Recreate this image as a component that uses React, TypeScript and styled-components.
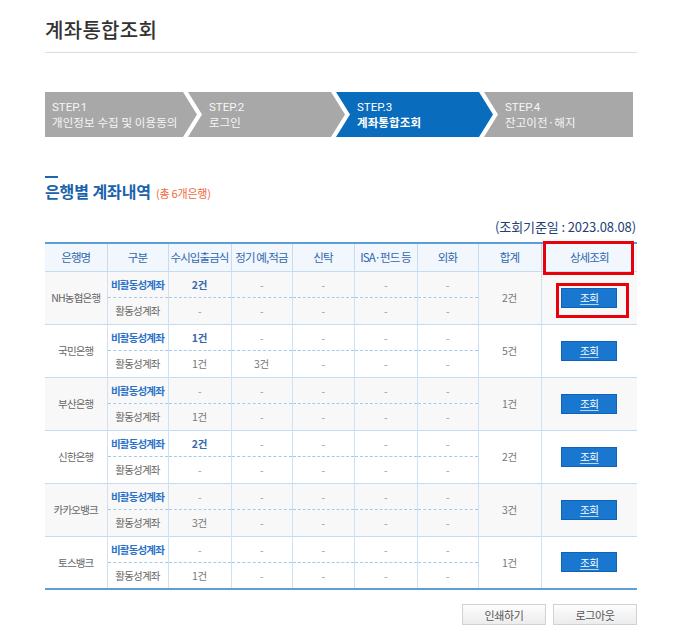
import React from 'react';
import styled, { createGlobalStyle } from 'styled-components';

const GlobalStyle = createGlobalStyle`
  html, body { margin: 0; padding: 0; background: #fff; }
  body { font-family: "Noto Sans CJK KR", "Noto Sans", sans-serif; color: #555; }
  * { box-sizing: border-box; }
`;

const Page = styled.div`
  width: 592px;
  margin-left: 45px;
  padding-top: 18px;
  padding-bottom: 20px;
`;

const Title = styled.h1`
  margin: 0;
  font-size: 20px;
  line-height: 24px;
  font-weight: 500;
  color: #333;
  letter-spacing: 0.3px;
  padding-bottom: 10px;
  border-bottom: 1px solid #dcdcdc;
`;

const Steps = styled.div`
  display: flex;
  width: 588px;
  height: 45px;
  margin-top: 39px;
`;

const Step = styled.div<{ $first?: boolean; $last?: boolean; $active?: boolean }>`
  flex: ${p => (p.$last ? '1 1 auto' : '0 0 auto')};
  width: ${p => (p.$first ? 152 : p.$last ? 149 : 157)}px;
  margin-left: ${p => (p.$first ? 0 : -9)}px;
  height: 45px;
  background: ${p => (p.$active ? '#0a6cbc' : '#a8a8a8')};
  color: ${p => (p.$active ? '#fff' : '#f6f6f6')};
  font-weight: ${p => (p.$active ? 700 : 400)};
  padding-left: ${p => (p.$first ? 7 : 21)}px;
  padding-top: 1px;
  display: flex;
  flex-direction: column;
  justify-content: center;
  font-size: 11.5px;
  line-height: 15px;
  letter-spacing: 0.1px;
  white-space: nowrap;
  clip-path: polygon(
    0 0,
    ${p => (p.$last ? '100% 0, 100% 100%' : 'calc(100% - 14px) 0, 100% 50%, calc(100% - 14px) 100%')},
    0 100%
    ${p => (p.$first ? '' : ', 14px 50%')}
  );
`;

const StepNo = styled.span`
  font-family: Roboto, "Liberation Sans", sans-serif;
  font-weight: 400;
  letter-spacing: 0;
  font-size: 11.5px;
`;

const SectionBar = styled.div`
  width: 13px;
  height: 2px;
  background: #1a66b0;
  margin-top: 39px;
`;

const SectionHead = styled.div`
  display: flex;
  align-items: baseline;
  gap: 5px;
  margin-top: 3px;
`;

const SectionTitle = styled.h2`
  margin: 0;
  font-size: 16px;
  line-height: 20px;
  font-weight: 700;
  color: #1a62ad;
  letter-spacing: -0.1px;
`;

const SectionCount = styled.span`
  font-size: 11px;
  color: #f06a3c;
  letter-spacing: -0.2px;
`;

const DateLine = styled.div`
  text-align: right;
  font-size: 13px;
  line-height: 16px;
  color: #233f74;
  margin-top: 18px;
  padding-right: 1px;
  letter-spacing: -0.1px;
`;

const Table = styled.table`
  width: 592px;
  margin-top: 7px;
  border-collapse: collapse;
  table-layout: fixed;
  border-top: 2px solid #5b9fd6;
  border-bottom: 2px solid #5b9fd6;
`;

const Th = styled.th`
  position: relative;
  height: 28px;
  padding: 0;
  background: #f1f7fd;
  color: #2f67ad;
  font-size: 11.5px;
  font-weight: 400;
  letter-spacing: -0.9px;
  white-space: nowrap;
  border-bottom: 1px solid #c5dcf0;
  & + & { border-left: 1px solid #c5dcf0; }
`;

const Row = styled.tr<{ $alt?: boolean; $first?: boolean }>`
  background: ${p => (p.$alt ? '#f8f8f8' : '#fff')};
  ${p => (p.$first ? 'border-top: 1px solid #c5dcf0;' : '')}
`;

const Td = styled.td<{ $dashed?: boolean; $edge?: boolean }>`
  position: relative;
  height: 26.5px;
  padding: 0;
  text-align: center;
  font-size: 10.5px;
  letter-spacing: -0.8px;
  white-space: nowrap;
  color: #777;
  border-left: ${p => (p.$edge ? 'none' : '1px solid #cfe2f3')};
  border-bottom: ${p => (p.$dashed ? '1px dashed #a5c9e8' : 'none')};
`;

const KindInactive = styled.span`
  color: #2a72c8;
  font-weight: 700;
`;

const KindActive = styled.span`
  color: #666;
`;

const Count = styled.span<{ $strong?: boolean }>`
  color: ${p => (p.$strong ? '#3a68ad' : '#777')};
  font-weight: ${p => (p.$strong ? 700 : 400)};
  letter-spacing: -0.3px;
`;

const Dash = styled.span`
  color: #999;
`;

const BankName = styled.span`
  color: #666;
`;

const ViewButton = styled.button`
  width: 56px;
  height: 20px;
  padding: 0;
  border: 1px solid #1062b2;
  background: #1a77d0;
  color: #fff;
  font-family: inherit;
  font-size: 10.5px;
  letter-spacing: -0.3px;
  text-decoration: underline;
  text-decoration-color: rgba(255, 255, 255, 0.7);
  text-underline-offset: 2px;
  cursor: pointer;
  vertical-align: middle;
`;

const Highlight = styled.span<{ $l: number; $t: number; $w: number; $h: number }>`
  position: absolute;
  left: ${p => p.$l}px;
  top: ${p => p.$t}px;
  width: ${p => p.$w}px;
  height: ${p => p.$h}px;
  border: 3px solid #e8000b;
  pointer-events: none;
`;

const Footer = styled.div`
  display: flex;
  justify-content: flex-end;
  gap: 7px;
  margin-top: 14px;
`;

const GrayButton = styled.button`
  width: 84px;
  height: 21px;
  padding: 0;
  border: 1px solid #d2d2d2;
  background: linear-gradient(#fdfdfd, #ececec);
  color: #555;
  font-family: inherit;
  font-size: 11px;
  letter-spacing: -0.4px;
`;

type Bank = {
  name: string;
  inactive: string[];
  active: string[];
  total: string;
  highlight?: boolean;
};

const banks: Bank[] = [
  { name: 'NH농협은행', inactive: ['2건', '-', '-', '-', '-'], active: ['-', '-', '-', '-', '-'], total: '2건', highlight: true },
  { name: '국민은행', inactive: ['1건', '-', '-', '-', '-'], active: ['1건', '3건', '-', '-', '-'], total: '5건' },
  { name: '부산은행', inactive: ['-', '-', '-', '-', '-'], active: ['1건', '-', '-', '-', '-'], total: '1건' },
  { name: '신한은행', inactive: ['2건', '-', '-', '-', '-'], active: ['-', '-', '-', '-', '-'], total: '2건' },
  { name: '카카오뱅크', inactive: ['-', '-', '-', '-', '-'], active: ['3건', '-', '-', '-', '-'], total: '3건' },
  { name: '토스뱅크', inactive: ['-', '-', '-', '-', '-'], active: ['1건', '-', '-', '-', '-'], total: '1건' },
];

const widths = [62, 61, 63, 61, 62, 63, 61, 63, 96];
const headers = ['은행명', '구분', '수시입출금식', '정기 예,적금', '신탁', 'ISA·펀드 등', '외화', '합계', '상세조회'];

const steps = [
  { no: 'STEP.1', label: '개인정보 수집 및 이용동의' },
  { no: 'STEP.2', label: '로그인' },
  { no: 'STEP.3', label: '계좌통합조회', active: true },
  { no: 'STEP.4', label: '잔고이전·해지' },
];

const Value = ({ v, strong }: { v: string; strong?: boolean }) =>
  v === '-' ? <Dash>-</Dash> : <Count $strong={strong}>{v}</Count>;

export default function App() {
  return (
    <>
      <GlobalStyle />
      <Page>
        <Title>계좌통합조회</Title>
        <Steps>
          {steps.map((s, i) => (
            <Step key={s.no} $first={i === 0} $last={i === steps.length - 1} $active={s.active}>
              <StepNo>{s.no}</StepNo>
              <span>{s.label}</span>
            </Step>
          ))}
        </Steps>

        <SectionBar />
        <SectionHead>
          <SectionTitle>은행별 계좌내역</SectionTitle>
          <SectionCount>(총 6개은행)</SectionCount>
        </SectionHead>
        <DateLine>(조회기준일 : 2023.08.08)</DateLine>

        <Table>
          <colgroup>
            {widths.map((w, i) => (
              <col key={i} style={{ width: w }} />
            ))}
          </colgroup>
          <thead>
            <tr>
              {headers.map((h, i) => (
                <Th key={h}>
                  {h}
                  {i === headers.length - 1 && <Highlight $l={1} $t={-3} $w={91} $h={34} />}
                </Th>
              ))}
            </tr>
          </thead>
          <tbody>
            {banks.map((b, bi) => (
              <React.Fragment key={b.name}>
                <Row $alt={bi % 2 === 0} $first={bi > 0}>
                  <Td rowSpan={2} $edge>
                    <BankName>{b.name}</BankName>
                  </Td>
                  <Td $dashed>
                    <KindInactive>비활동성계좌</KindInactive>
                  </Td>
                  {b.inactive.map((v, i) => (
                    <Td key={i} $dashed>
                      <Value v={v} strong />
                    </Td>
                  ))}
                  <Td rowSpan={2}>
                    <Value v={b.total} />
                  </Td>
                  <Td rowSpan={2}>
                    <ViewButton>조회</ViewButton>
                    {b.highlight && <Highlight $l={14} $t={11} $w={73} $h={35} />}
                  </Td>
                </Row>
                <Row $alt={bi % 2 === 0}>
                  <Td>
                    <KindActive>활동성계좌</KindActive>
                  </Td>
                  {b.active.map((v, i) => (
                    <Td key={i}>
                      <Value v={v} />
                    </Td>
                  ))}
                </Row>
              </React.Fragment>
            ))}
          </tbody>
        </Table>

        <Footer>
          <GrayButton>인쇄하기</GrayButton>
          <GrayButton>로그아웃</GrayButton>
        </Footer>
      </Page>
    </>
  );
}
